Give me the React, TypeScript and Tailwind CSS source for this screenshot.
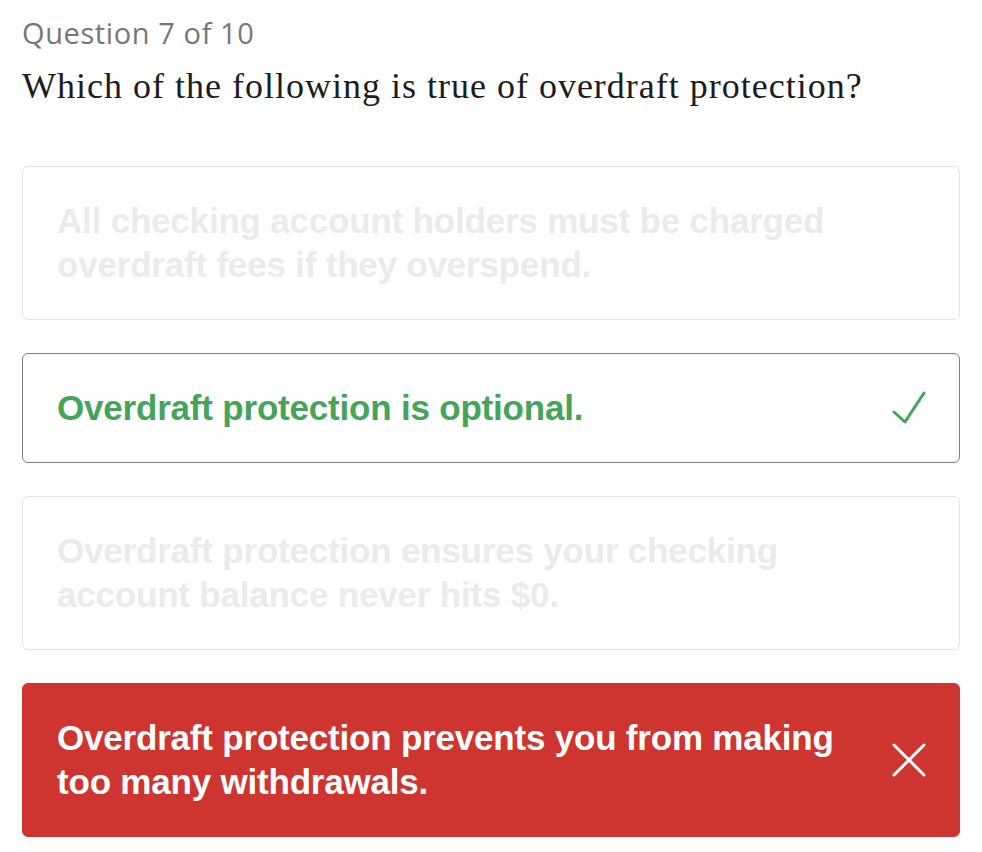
type Choice = {
  text: string;
  state: "faded" | "correct" | "wrong";
};

const choices: Choice[] = [
  { text: "All checking account holders must be charged overdraft fees if they overspend.", state: "faded" },
  { text: "Overdraft protection is optional.", state: "correct" },
  { text: "Overdraft protection ensures your checking account balance never hits $0.", state: "faded" },
  { text: "Overdraft protection prevents you from making too many withdrawals.", state: "wrong" },
];

function CheckMark() {
  return (
    <svg width="34" height="34" viewBox="0 0 34 34" fill="none" stroke="#45a35a" strokeWidth="3" strokeLinecap="round" strokeLinejoin="round" className="shrink-0">
      <polyline points="2,21 13,31 32,2" />
    </svg>
  );
}

function Cross() {
  return (
    <svg width="34" height="34" viewBox="0 0 34 34" fill="none" stroke="#ffffff" strokeWidth="3" strokeLinecap="round" className="shrink-0">
      <line x1="2" y1="2" x2="32" y2="32" />
      <line x1="32" y1="2" x2="2" y2="32" />
    </svg>
  );
}

function ChoiceCard({ choice }: { choice: Choice }) {
  const box =
    choice.state === "wrong"
      ? "bg-[#cf3530] border-[#cf3530] text-white"
      : choice.state === "correct"
        ? "bg-white border-[#7d7d7d] text-[#45a35a]"
        : "bg-white border-[#e4e4e4] text-[#ebebeb]";

  return (
    <div className={`flex items-center justify-between rounded-md border pl-[34px] pr-[33px] py-[32px] ${box}`}>
      <p
        className="text-[35px] leading-[44px] font-bold tracking-[-0.2px] max-w-[810px]"
        style={{ fontFamily: "'Liberation Sans Narrow', 'Liberation Sans', Arial, sans-serif" }}
      >
        {choice.text}
      </p>
      {choice.state === "correct" && <CheckMark />}
      {choice.state === "wrong" && <Cross />}
    </div>
  );
}

export default function App() {
  return (
    <div className="min-h-screen bg-white px-[22px] pt-[13px] pb-4">
      <p className="text-[29px] leading-[39px] tracking-[0.6px] text-[#777777]" style={{ fontFamily: "'Open Sans', 'Liberation Sans', sans-serif" }}>
        Question 7 of 10
      </p>
      <h1 className="mt-[12px] text-[36px] leading-[44px] tracking-[1px] text-[#1c1c1c]" style={{ fontFamily: "'Liberation Serif', serif" }}>
        Which of the following is true of overdraft protection?
      </h1>
      <div className="mt-[58px] flex flex-col gap-[33px]">
        {choices.map((c) => (
          <ChoiceCard key={c.text} choice={c} />
        ))}
      </div>
    </div>
  );
}
